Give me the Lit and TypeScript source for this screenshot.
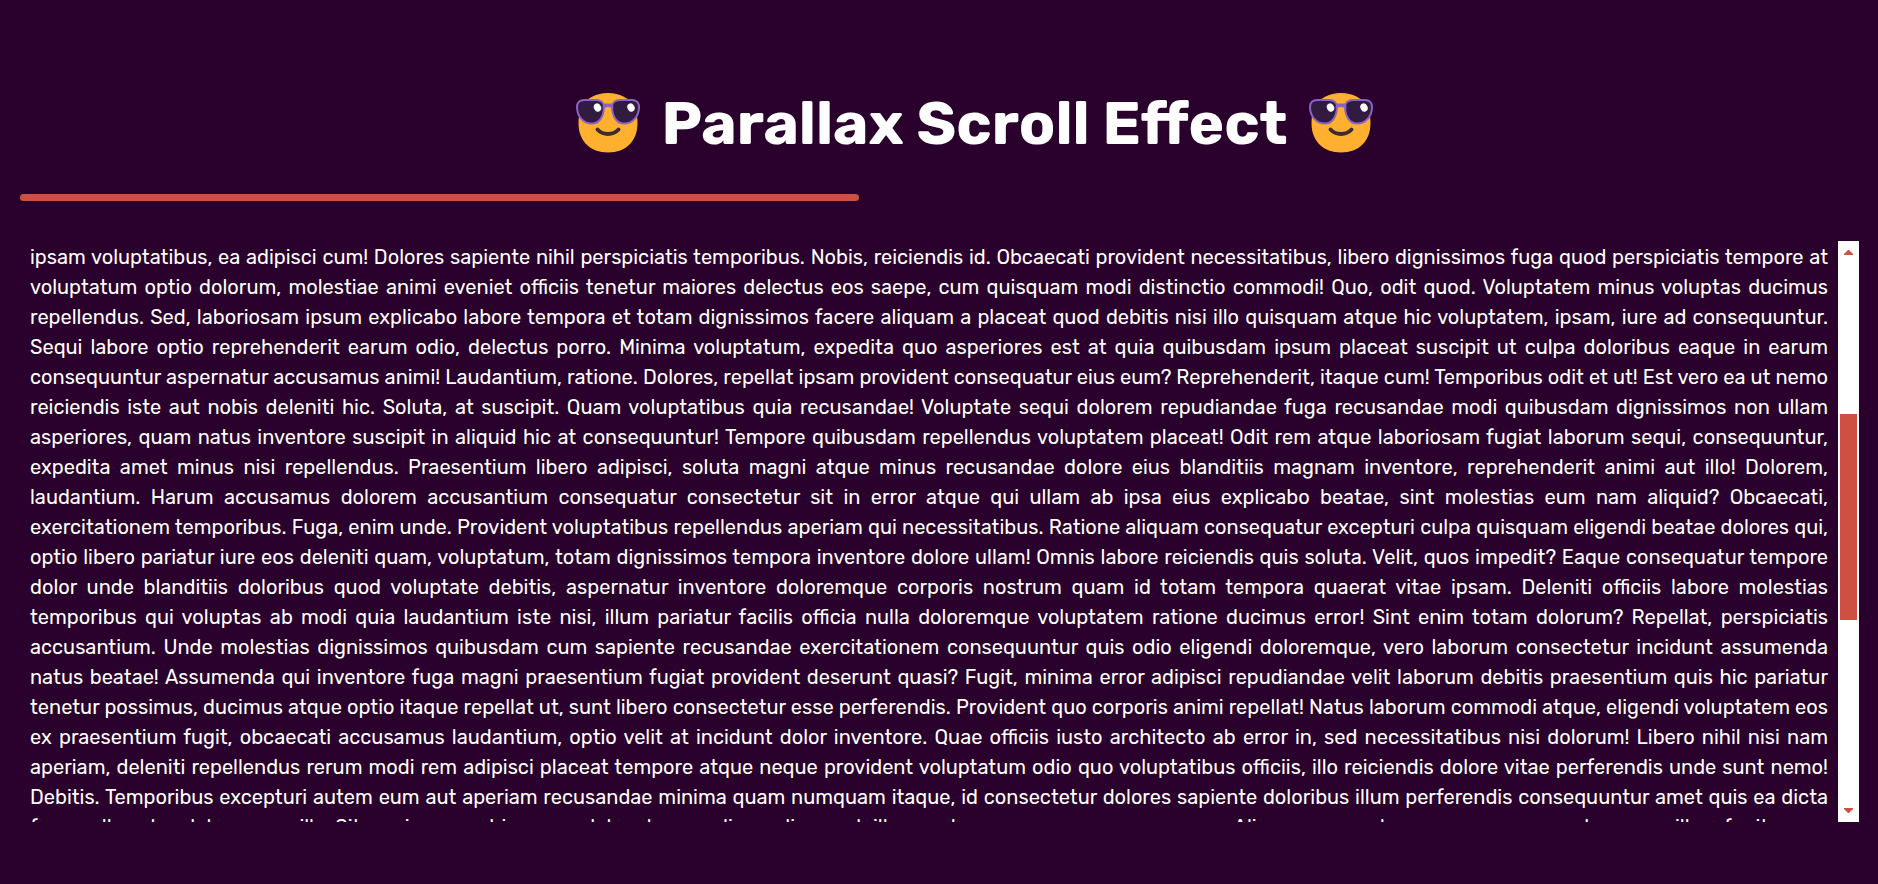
import { LitElement, html, css } from "lit";
import { customElement, property } from "lit/decorators.js";

const LINES: string[] = [
  "ipsam voluptatibus, ea adipisci cum! Dolores sapiente nihil perspiciatis temporibus. Nobis, reiciendis id. Obcaecati provident necessitatibus, libero dignissimos fuga quod perspiciatis tempore at",
  "voluptatum optio dolorum, molestiae animi eveniet officiis tenetur maiores delectus eos saepe, cum quisquam modi distinctio commodi! Quo, odit quod. Voluptatem minus voluptas ducimus",
  "repellendus. Sed, laboriosam ipsum explicabo labore tempora et totam dignissimos facere aliquam a placeat quod debitis nisi illo quisquam atque hic voluptatem, ipsam, iure ad consequuntur.",
  "Sequi labore optio reprehenderit earum odio, delectus porro. Minima voluptatum, expedita quo asperiores est at quia quibusdam ipsum placeat suscipit ut culpa doloribus eaque in earum",
  "consequuntur aspernatur accusamus animi! Laudantium, ratione. Dolores, repellat ipsam provident consequatur eius eum? Reprehenderit, itaque cum! Temporibus odit et ut! Est vero ea ut nemo",
  "reiciendis iste aut nobis deleniti hic. Soluta, at suscipit. Quam voluptatibus quia recusandae! Voluptate sequi dolorem repudiandae fuga recusandae modi quibusdam dignissimos non ullam",
  "asperiores, quam natus inventore suscipit in aliquid hic at consequuntur! Tempore quibusdam repellendus voluptatem placeat! Odit rem atque laboriosam fugiat laborum sequi, consequuntur,",
  "expedita amet minus nisi repellendus. Praesentium libero adipisci, soluta magni atque minus recusandae dolore eius blanditiis magnam inventore, reprehenderit animi aut illo! Dolorem,",
  "laudantium. Harum accusamus dolorem accusantium consequatur consectetur sit in error atque qui ullam ab ipsa eius explicabo beatae, sint molestias eum nam aliquid? Obcaecati,",
  "exercitationem temporibus. Fuga, enim unde. Provident voluptatibus repellendus aperiam qui necessitatibus. Ratione aliquam consequatur excepturi culpa quisquam eligendi beatae dolores qui,",
  "optio libero pariatur iure eos deleniti quam, voluptatum, totam dignissimos tempora inventore dolore ullam! Omnis labore reiciendis quis soluta. Velit, quos impedit? Eaque consequatur tempore",
  "dolor unde blanditiis doloribus quod voluptate debitis, aspernatur inventore doloremque corporis nostrum quam id totam tempora quaerat vitae ipsam. Deleniti officiis labore molestias",
  "temporibus qui voluptas ab modi quia laudantium iste nisi, illum pariatur facilis officia nulla doloremque voluptatem ratione ducimus error! Sint enim totam dolorum? Repellat, perspiciatis",
  "accusantium. Unde molestias dignissimos quibusdam cum sapiente recusandae exercitationem consequuntur quis odio eligendi doloremque, vero laborum consectetur incidunt assumenda",
  "natus beatae! Assumenda qui inventore fuga magni praesentium fugiat provident deserunt quasi? Fugit, minima error adipisci repudiandae velit laborum debitis praesentium quis hic pariatur",
  "tenetur possimus, ducimus atque optio itaque repellat ut, sunt libero consectetur esse perferendis. Provident quo corporis animi repellat! Natus laborum commodi atque, eligendi voluptatem eos",
  "ex praesentium fugit, obcaecati accusamus laudantium, optio velit at incidunt dolor inventore. Quae officiis iusto architecto ab error in, sed necessitatibus nisi dolorum! Libero nihil nisi nam",
  "aperiam, deleniti repellendus rerum modi rem adipisci placeat tempore atque neque provident voluptatum odio quo voluptatibus officiis, illo reiciendis dolore vitae perferendis unde sunt nemo!",
  "Debitis. Temporibus excepturi autem eum aut aperiam recusandae minima quam numquam itaque, id consectetur dolores sapiente doloribus illum perferendis consequuntur amet quis ea dicta",
  "fuga nulla culpa doloremque illo. Sit maxime cum hic rerum dolor at eum odio modi vero ab illum sed numquam eaque rerum cum. Aliquam quaerat numquam earum sed cumque illum fugit eaque nisi a",
];

@customElement("cool-face")
export class CoolFace extends LitElement {
  static styles = css`
    :host {
      display: block;
      flex: none;
    }
    .face {
      display: block;
      width: 64px;
      height: 60px;
    }
  `;

  render() {
    return html`
      <svg class="face" viewBox="0 0 64 60" aria-hidden="true">
        <path
          d="M32 0C20 0 11.500 5 6.500 13C3.500 18 2.500 24 2.500 30C2.500 48 14 59.500 32 59.500C50 59.500 61.500 48 61.500 30C61.500 24 60.500 18 57.500 13C52.500 5 44 0 32 0Z"
          fill="#ffb02e"
        />
        <path d="M21.500 36.500C27 42.500 37 42.500 42.500 36.500" fill="none" stroke="#402a32" stroke-width="4" stroke-linecap="round" />
        <path
          d="M8 7H20C25 7 28.200 9.500 28 14.500C27.500 24 23 30.500 16 30.500C7 30.500 1 23 1 14C1 9.500 4 7 8 7Z"
          fill="#321b41"
          stroke="#8b62c6"
          stroke-width="2"
        />
        <path
          d="M56 7H44C39 7 35.800 9.500 36 14.500C36.500 24 41 30.500 48 30.500C57 30.500 63 23 63 14C63 9.500 60 7 56 7Z"
          fill="#321b41"
          stroke="#8b62c6"
          stroke-width="2"
        />
        <path d="M27 10.500H37L37.500 15.500Q35 14 32 14Q29 14 26.500 15.500Z" fill="#8b62c6" />
        <ellipse cx="21.500" cy="14.500" rx="3.500" ry="4.200" transform="rotate(-28 21.500 14.500)" fill="#fff" />
        <ellipse cx="55" cy="14.500" rx="3.500" ry="4.200" transform="rotate(-28 55 14.500)" fill="#fff" />
      </svg>
    `;
  }
}

@customElement("scroll-rail")
export class ScrollRail extends LitElement {
  @property({ type: Number }) start = 0;
  @property({ type: Number }) size = 50;

  static styles = css`
    :host {
      display: flex;
      flex-direction: column;
      flex: none;
      width: 21px;
      background: #fff;
    }
    .step {
      display: flex;
      align-items: center;
      justify-content: center;
      flex: none;
      height: 23px;
      padding: 0;
      border: 0;
      background: none;
    }
    .arrow {
      display: block;
      width: 9px;
      height: 5px;
      fill: #cd5042;
    }
    .track {
      flex: 1;
      display: flex;
      flex-direction: column;
      padding: 0 2px;
    }
    .thumb {
      flex: none;
      background: #cd5042;
    }
  `;

  render() {
    return html`
      <button class="step" aria-label="Scroll up">
        <svg class="arrow" viewBox="0 0 9 5"><path d="M0 5V4L4 0H5L9 4V5Z" /></svg>
      </button>
      <div class="track">
        <div style="height:${this.start}%"></div>
        <div class="thumb" style="height:${this.size}%"></div>
      </div>
      <button class="step" aria-label="Scroll down">
        <svg class="arrow" viewBox="0 0 9 5"><path d="M0 0V1L4 5H5L9 1V0Z" /></svg>
      </button>
    `;
  }
}

@customElement("app-root")
export class AppRoot extends LitElement {
  @property({ type: Number }) progress = 45.6;

  static styles = css`
    :host {
      display: flex;
      flex-direction: column;
      box-sizing: border-box;
      height: 100vh;
      padding: 82px 19px 62px 20px;
      overflow: hidden;
      background: #2a002c;
      color: #fff;
      font-family: Rubik, Roboto, sans-serif;
    }
    .header {
      display: flex;
      align-items: center;
      justify-content: center;
      gap: 21px;
      padding-left: 70px;
    }
    .title {
      margin: 0;
      padding-top: 2px;
      font-size: 60px;
      line-height: 80px;
      font-weight: 700;
      white-space: nowrap;
    }
    .meter {
      flex: none;
      height: 7px;
      margin: 30px 0 40px;
    }
    .fill {
      height: 100%;
      border-radius: 4px;
      background: #cd5042;
    }
    .reader {
      flex: 1;
      min-height: 0;
      display: flex;
    }
    .text {
      flex: 1;
      min-width: 0;
      margin: 0;
      padding: 1px 10px 0;
      overflow: hidden;
      font-size: 20px;
      line-height: 30px;
    }
    .line {
      display: block;
      white-space: nowrap;
      text-align: justify;
      text-align-last: justify;
    }
  `;

  render() {
    return html`
      <header class="header">
        <cool-face></cool-face>
        <h1 class="title">Parallax Scroll Effect</h1>
        <cool-face></cool-face>
      </header>
      <div class="meter" role="progressbar" aria-label="Reading progress" aria-valuenow=${this.progress}>
        <div class="fill" style="width:${this.progress}%"></div>
      </div>
      <main class="reader">
        <p class="text">${LINES.map((line) => html`<span class="line">${line}</span>`)}</p>
        <scroll-rail start="28" size="38.5"></scroll-rail>
      </main>
    `;
  }
}
